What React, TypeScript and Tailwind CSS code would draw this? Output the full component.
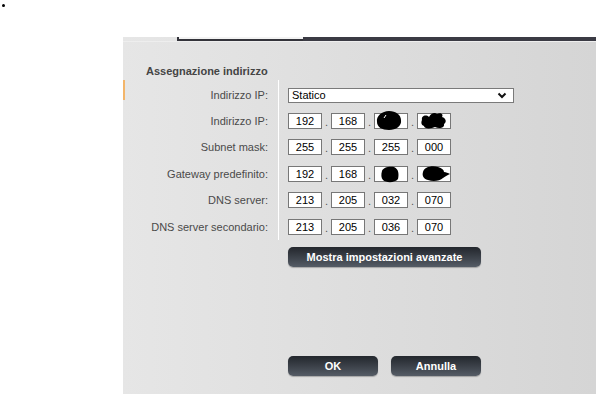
import React from "react";

const font = { fontFamily: '"Liberation Sans", Arial, sans-serif' };

const blobs: Record<string, React.ReactNode> = {
  a: (
    <path d="M3 9 C2 3 8 -2 15 -2 C22 -2 27 2 27 7 C28 13 22 17 15 17 C8 17 3 14 3 9 Z" fill="#000" />
  ),
  b: (
    <path d="M5 7 C4 3 9 1 12 4 C14 0 18 -1 20 1 C23 -1 27 1 25 4 C29 5 30 9 27 11 C28 15 22 16 18 14 C14 16 7 16 7 13 C4 12 4 9 5 7 Z" fill="#000" />
  ),
  c: (
    <path d="M8 5 C9 1 16 0 20 1 C25 3 25 9 24 13 C21 17 12 17 9 14 C7 12 7 8 8 5 Z" fill="#000" />
  ),
  d: (
    <path d="M6 6 C7 1 15 -1 21 1 C25 2 27 4 27 6 C29 6 31 7 33 8 C30 9 28 11 26 12 C23 15 16 16 11 14 C6 13 5 9 6 6 Z" fill="#000" />
  ),
};

const IpBox = ({ v, blob }: { v?: string; blob?: string }) => (
  <div className="relative w-[34px] h-[16px] border border-[#777] bg-white text-center text-[11px] leading-[14px] text-black">
    {v}
    {blob && (
      <svg className="absolute left-[-1px] top-[-1px] overflow-visible" width="34" height="16" viewBox="0 0 34 16">
        {blobs[blob]}
        {blob === "a" && <path d="M10 5 L12 2" stroke="#fff" strokeWidth="1" />}
      </svg>
    )}
  </div>
);

const Dot = () => (
  <div className="w-[9px] h-[16px] flex items-end justify-center text-[11px] leading-[14px] text-[#555]">.</div>
);

const IpRow = ({ vals, blobs: bl = [] }: { vals: string[]; blobs?: string[] }) => (
  <div className="flex items-center h-[26.5px]">
    <IpBox v={vals[0]} />
    <Dot />
    <IpBox v={vals[1]} />
    <Dot />
    <IpBox v={vals[2]} blob={bl[2]} />
    <Dot />
    <IpBox v={vals[3]} blob={bl[3]} />
  </div>
);

const DarkButton = ({ children, className }: { children: React.ReactNode; className: string }) => (
  <button className={`block h-[20px] rounded-[5px] bg-gradient-to-b from-[#23272d] to-[#555c66] text-white text-[11px] font-bold shadow-[0_1px_1px_rgba(0,0,0,0.25)] ${className}`}>
    {children}
  </button>
);

const labels = [
  "Indirizzo IP:",
  "Indirizzo IP:",
  "Subnet mask:",
  "Gateway predefinito:",
  "DNS server:",
  "DNS server secondario:",
];

export default function App() {
  return (
    <div className="w-[596px] h-[394px] bg-white overflow-hidden" style={font}>
      <div className="ml-[2px] mt-[4px] w-[3px] h-[3px] rounded-full bg-black" />
      <div className="relative ml-[123px] mt-[30px] h-[357px] bg-gradient-to-r from-[#e6e6e6] to-[#d5d5d5]">
        <div className="flex h-[4px]">
          <div className="w-[54px]" />
          <div className="w-[126px] border-l-2 border-b-2 border-[#33333a] bg-[#f3f3f3]" />
          <div className="flex-1 bg-[#3b3b44]" />
        </div>
        <div className="h-[1px] bg-[#eeeeee]" />
        <div className="pl-[23px] pt-[22px] text-[11px] leading-[14px] font-bold text-[#444]">
          Assegnazione indirizzo
        </div>
        <div className="absolute left-0 top-[43px] w-[2px] h-[20px] bg-[#f3b56a]" />
        <div className="flex mt-[2px]">
          <div className="w-[155px] pr-[10px] pt-[2.5px] text-right text-[11px] text-[#4a4a4a]">
            {labels.map((l, i) => (
              <div key={i} className={`flex items-center justify-end ${i === 0 ? "h-[25px]" : "h-[26.5px]"}`}>
                {l}
              </div>
            ))}
          </div>
          <div className="border-l border-white pl-[9px] pt-[2.5px]">
            <div className="h-[25px] flex items-center">
              <div className="w-[226px] h-[15px] border border-[#7a7a7a] bg-white flex items-center justify-between pl-[3px] pr-[6px] text-[11px] text-black">
                <span>Statico</span>
                <svg width="10" height="7" viewBox="0 0 10 7">
                  <path d="M1.5 1.5 L5 5 L8.5 1.5" fill="none" stroke="#111" strokeWidth="2" />
                </svg>
              </div>
            </div>
            <IpRow vals={["192", "168", "", ""]} blobs={["", "", "a", "b"]} />
            <IpRow vals={["255", "255", "255", "000"]} />
            <IpRow vals={["192", "168", "", ""]} blobs={["", "", "c", "d"]} />
            <IpRow vals={["213", "205", "032", "070"]} />
            <IpRow vals={["213", "205", "036", "070"]} />
          </div>
        </div>
        <div className="pl-[165px] mt-[7px]">
          <DarkButton className="w-[193px]">Mostra impostazioni avanzate</DarkButton>
          <div className="flex gap-[13px] mt-[89px]">
            <DarkButton className="w-[90px]">OK</DarkButton>
            <DarkButton className="w-[90px]">Annulla</DarkButton>
          </div>
        </div>
      </div>
    </div>
  );
}
